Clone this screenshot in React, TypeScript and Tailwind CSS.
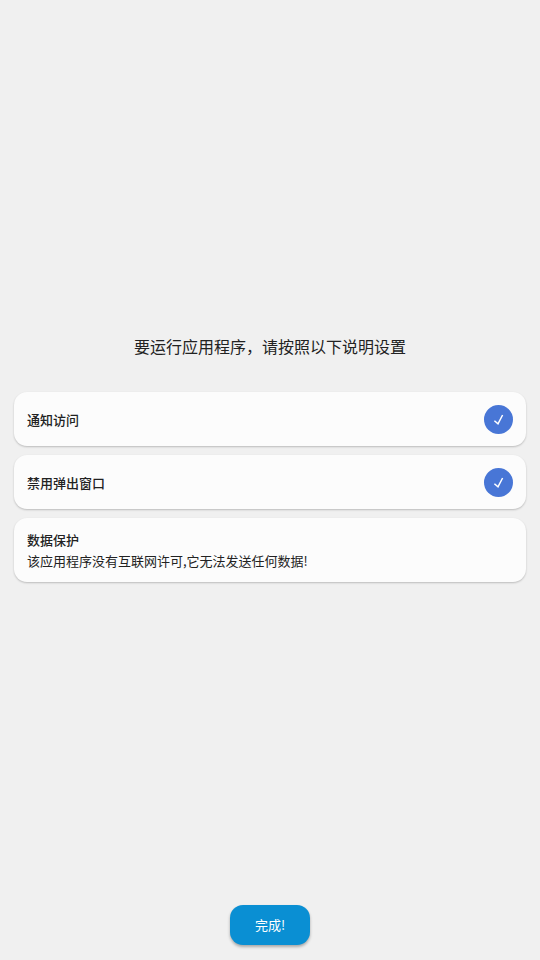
import { ReactNode } from "react";

interface PermissionCardProps {
    title: string;
    granted?: boolean;
    children?: ReactNode;
}

function CheckBadge() {
    return (
        <svg viewBox="0 0 29 29" className="block h-[29px] w-[29px]" aria-hidden="true">
            <circle cx="14.5" cy="14.5" r="14.5" fill="#4876d6" />
            <path
                d="M10.4 15.7 L14 18.9 L18.6 10"
                fill="none"
                stroke="#fff"
                strokeWidth="1.5"
            />
        </svg>
    );
}

function PermissionCard({ title, granted, children }: PermissionCardProps) {
    return (
        <section className="flex min-h-[54px] items-center justify-between rounded-[13px] bg-[#fcfcfc] px-[13px] py-[11px] shadow-[0_1px_2px_rgba(0,0,0,0.22)]">
            <div>
                <h2 className="text-[13px] leading-[21px] font-medium">{title}</h2>
                {children}
            </div>
            {granted && (
                <button type="button" aria-label={title} className="cursor-pointer rounded-full">
                    <CheckBadge />
                </button>
            )}
        </section>
    );
}

export default function App() {
    return (
        <div className="flex min-h-screen flex-col bg-[#f0f0f0] px-[14px] pt-[11px] pb-[15px] font-['Noto_Sans_CJK_SC',sans-serif] text-[#222222]">
            <main className="flex flex-1 flex-col justify-center">
                <h1 className="text-center text-[16px] leading-6">要运行应用程序，请按照以下说明设置</h1>
                <div className="mt-[34px] flex flex-col gap-[9px]">
                    <PermissionCard title="通知访问" granted />
                    <PermissionCard title="禁用弹出窗口" granted />
                    <PermissionCard title="数据保护">
                        <p className="text-[13px] leading-[21px]">该应用程序没有互联网许可,它无法发送任何数据!</p>
                    </PermissionCard>
                </div>
            </main>
            <footer className="flex justify-center">
                <button
                    type="button"
                    className="h-10 w-20 cursor-pointer rounded-[13px] bg-[#0a8fd3] text-[13px] text-white shadow-[0_2px_3px_rgba(0,0,0,0.3)]"
                >
                    完成!
                </button>
            </footer>
        </div>
    );
}
